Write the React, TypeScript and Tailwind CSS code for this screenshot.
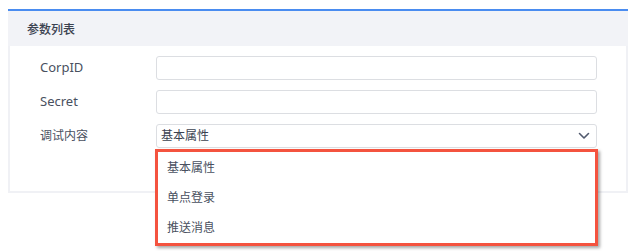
import React from "react";

const font = { fontFamily: '"Noto Sans", "Noto Sans CJK SC", sans-serif' };

export default function App() {
  const rows = [
    { label: "CorpID", value: "" },
    { label: "Secret", value: "" },
  ];
  return (
    <div className="w-[638px] h-[251px] bg-white pt-[9px] pl-[8px] relative text-[#495060]" style={font}>
      <div className="w-[620px] border-t-2 border-[#4a8cf0]">
        <div className="h-[35px] bg-[#f2f3f7] flex items-center pl-[19px] pt-[3px] text-[12px] font-medium text-[#3b4250]">参数列表</div>
        <div className="border-2 border-t-0 border-[#f0f1f5] pt-[10px] pb-[43px] flex flex-col gap-[10px]">
          {rows.map((r) => (
            <div key={r.label} className="flex items-center">
              <div className="w-[146px] pl-[30px] text-[13px]">{r.label}</div>
              <div className="w-[441px] h-[24px] border border-[#dcdee2] rounded-[3px] bg-white" />
            </div>
          ))}
          <div className="flex items-center">
            <div className="w-[146px] pl-[30px] text-[12px]">调试内容</div>
            <div className="w-[441px] h-[24px] border border-[#dcdee2] rounded-[3px] bg-white flex items-center justify-between pl-[4px] pr-[6px] text-[12px] text-[#3b4250]">
              <span>基本属性</span>
              <svg width="12" height="8" viewBox="0 0 12 8" fill="none">
                <path d="M1.5 1.5 L6 6 L10.5 1.5" stroke="#515a6e" strokeWidth="1.6" strokeLinecap="round" strokeLinejoin="round" />
              </svg>
            </div>
          </div>
        </div>
      </div>
      <div className="absolute left-[155px] top-[149px] w-[443px] h-[97px] border-[3px] border-[#f4533f] bg-white shadow-[2px_2px_3px_rgba(0,0,0,0.35)] flex flex-col pt-[1px] text-[12px] text-[#495060]">
        <div className="h-[30px] flex items-center pl-[9px]">基本属性</div>
        <div className="h-[30px] flex items-center pl-[9px]">单点登录</div>
        <div className="h-[30px] flex items-center pl-[9px]">推送消息</div>
      </div>
    </div>
  );
}
